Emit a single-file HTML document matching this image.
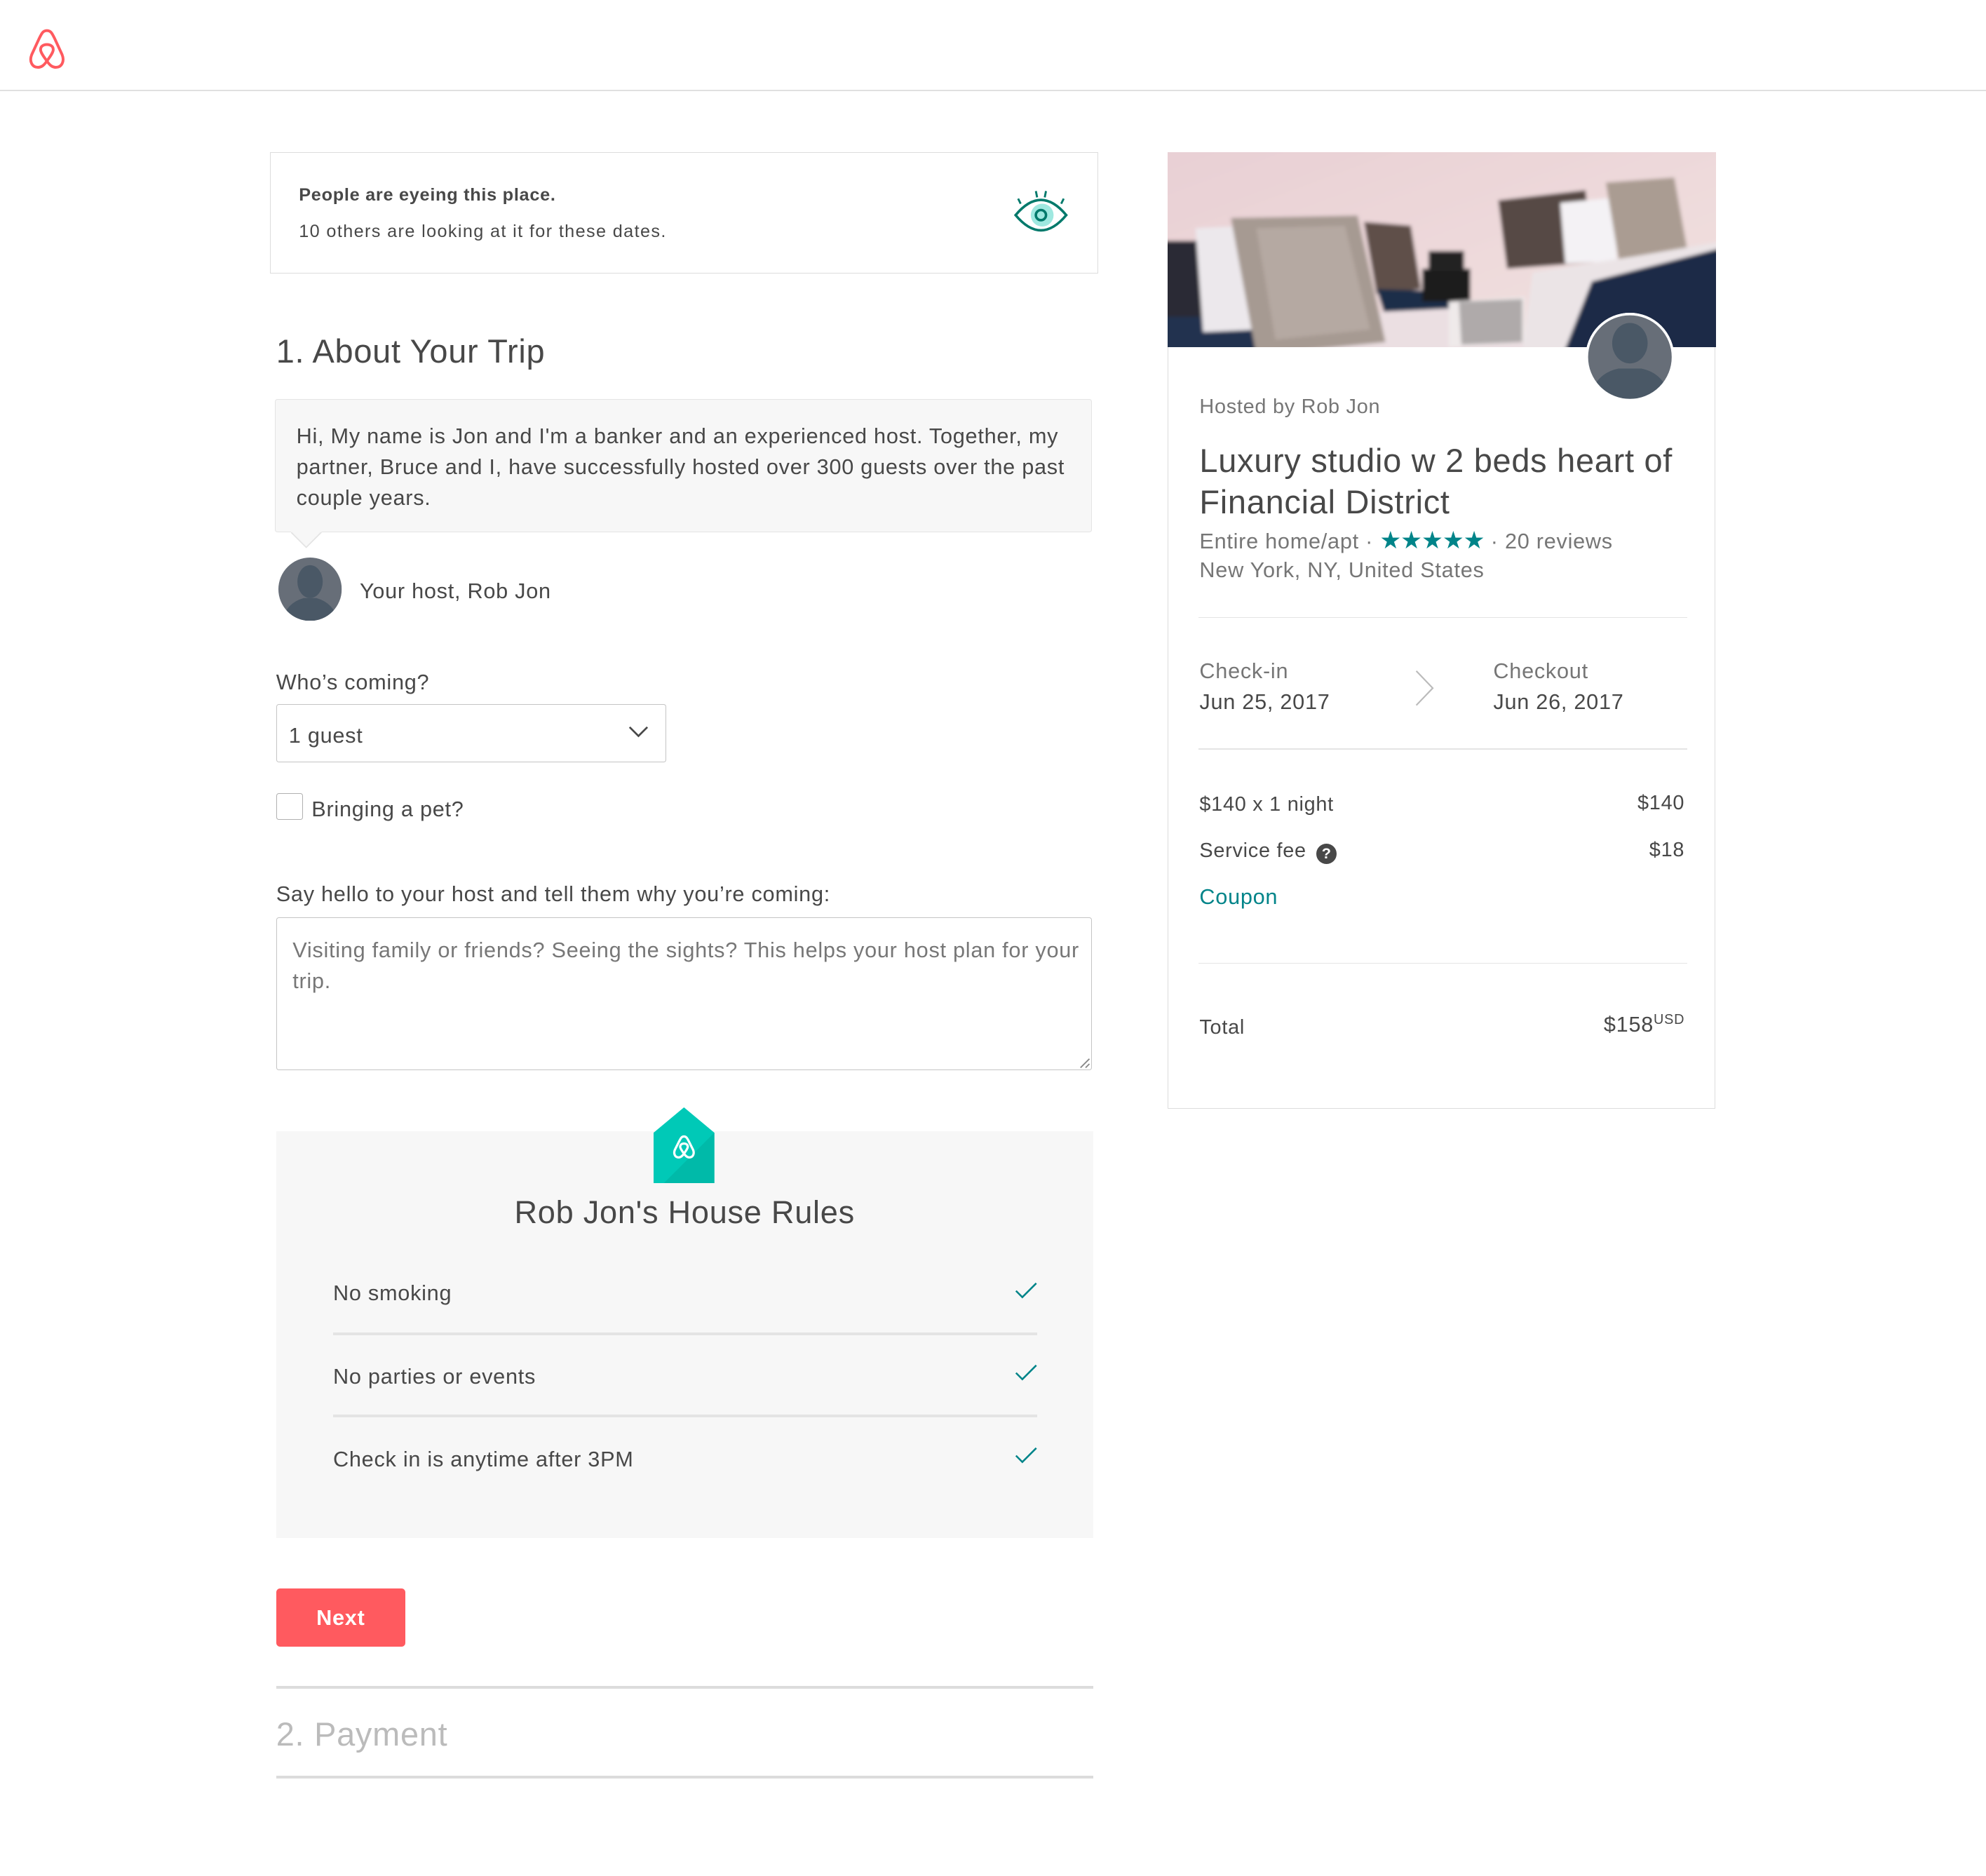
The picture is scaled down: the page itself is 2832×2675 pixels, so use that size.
<!DOCTYPE html>
<html><head><meta charset="utf-8">
<style>
html,body{margin:0;padding:0;background:#fff;}
body{width:2832px;height:2674px;overflow:hidden;}
#w{zoom:1.80612;position:relative;width:1568px;height:1481px;font-family:"Liberation Sans",sans-serif;color:#484848;letter-spacing:0.4px;}
.a{position:absolute;white-space:nowrap;}
.line{position:absolute;height:1px;background:#e4e4e4;}
</style></head><body><div id="w">
<!-- header -->
<svg class="a" style="left:21px;top:22px" width="32" height="34" viewBox="0 0 32 34"><path d="M16 2 C13 2 12 4 10 8 L4 21 C2 26 4 31 9 31 C12 31 14 29 16 26 C18 29 20 31 23 31 C28 31 30 26 28 21 L22 8 C20 4 19 2 16 2 Z M16 26 C13 22 11 19 11 17 C11 14.5 13 13 16 13 C19 13 21 14.5 21 17 C21 19 19 22 16 26 Z" fill="none" stroke="#ff5a5f" stroke-width="2.2"/></svg>
<div class="line" style="left:0;top:71px;width:1568px;background:#e0e0e0"></div>

<!-- alert -->
<div class="a" style="left:213px;top:120px;width:653px;height:95px;border:1px solid #dcdcdc;"></div>
<div class="a" style="left:236px;top:146px;font-size:14px;font-weight:bold;letter-spacing:0.4px">People are eyeing this place.</div>
<div class="a" style="left:236px;top:175px;font-size:14px;letter-spacing:0.75px">10 others are looking at it for these dates.</div>
<svg class="a" style="left:798px;top:148px" width="48" height="42" viewBox="0 0 48 42"><circle cx="25" cy="22" r="9" fill="#9fe8e0"/><path d="M4 22 Q24 -2 44 22 Q24 46 4 22 Z" fill="none" stroke="#00796b" stroke-width="2"/><circle cx="24" cy="22" r="4" fill="none" stroke="#00796b" stroke-width="2"/><path d="M20 3 l1 5 M28 3 l-1 5 M6 9 l2 4 M42 9 l-2 4" stroke="#00796b" stroke-width="1.6"/></svg>

<div class="a" style="left:218px;top:262px;font-size:26px;">1. About Your Trip</div>

<div class="a" style="left:217px;top:315px;width:644px;height:104px;background:#f7f7f7;border:1px solid #e4e4e4;border-radius:2px"></div>
<svg class="a" style="left:230px;top:419px" width="24" height="14"><path d="M0 1 L12 13 L24 1" fill="#f7f7f7" stroke="#e4e4e4"/><rect x="0" y="0" width="24" height="1" fill="#f7f7f7"/></svg>
<div class="a" style="left:234px;top:332px;width:620px;white-space:normal;font-size:17px;line-height:24.5px;">Hi, My name is Jon and I'm a banker and an experienced host. Together, my partner, Bruce and I, have successfully hosted over 300 guests over the past couple years.</div>

<svg class="a" style="left:220px;top:440px" width="50" height="50" viewBox="0 0 50 50"><defs><clipPath id="c1"><circle cx="25" cy="25" r="25"/></clipPath></defs><g clip-path="url(#c1)"><rect width="50" height="50" fill="#676e78"/><ellipse cx="25" cy="19" rx="10" ry="13" fill="#4a5866"/><path d="M3 50 Q6 36 20 32 L30 32 Q44 36 47 50 Z" fill="#4a5866"/></g></svg>
<div class="a" style="left:284px;top:457px;font-size:17px;">Your host, Rob Jon</div>

<div class="a" style="left:218px;top:529px;font-size:17px;">Who’s coming?</div>
<div class="a" style="left:218px;top:556px;width:307px;height:45px;border:1px solid #c4c4c4;border-radius:2px"></div>
<div class="a" style="left:228px;top:571px;font-size:17px;">1 guest</div>
<svg class="a" style="left:496px;top:573px" width="16" height="10"><path d="M1 1 L8 8 L15 1" fill="none" stroke="#484848" stroke-width="1.5"/></svg>

<div class="a" style="left:218px;top:626px;width:20px;height:20px;border:1px solid #b0b0b0;border-radius:2px"></div>
<div class="a" style="left:246px;top:629px;font-size:17px;">Bringing a pet?</div>

<div class="a" style="left:218px;top:696px;font-size:17px;">Say hello to your host and tell them why you’re coming:</div>
<div class="a" style="left:218px;top:724px;width:643px;height:120px;border:1px solid #c4c4c4;border-radius:2px"></div>
<div class="a" style="left:231px;top:738px;width:625px;white-space:normal;font-size:17px;line-height:24.5px;color:#777">Visiting family or friends? Seeing the sights? This helps your host plan for your trip.</div>
<svg class="a" style="left:852px;top:835px" width="9" height="9"><path d="M1 8 L8 1 M5 8 L8 5" stroke="#888" stroke-width="1"/></svg>

<!-- house rules -->
<div class="a" style="left:218px;top:893px;width:645px;height:321px;background:#f7f7f7"></div>
<svg class="a" style="left:516px;top:874px" width="48" height="60" viewBox="0 0 48 60"><path d="M24 0 L48 20 L48 60 L0 60 L0 20 Z" fill="#00c9b7"/><path d="M48 20 L48 60 L8 60 Z" fill="#00b3a3" opacity="0.7"/><path d="M24 23 C22.2 23 21.5 24.2 20.3 26.6 L16.8 33.5 C15.6 36.5 16.8 39.5 19.8 39.5 C21.6 39.5 22.8 38.3 24 36.5 C25.2 38.3 26.4 39.5 28.2 39.5 C31.2 39.5 32.4 36.5 31.2 33.5 L27.7 26.6 C26.5 24.2 25.8 23 24 23 Z M24 36.5 C22.2 34.1 21 32.3 21 31.1 C21 29.6 22.2 28.6 24 28.6 C25.8 28.6 27 29.6 27 31.1 C27 32.3 25.8 34.1 24 36.5 Z" fill="none" stroke="#fff" stroke-width="1.8"/></svg>
<div class="a" style="left:218px;top:943px;width:645px;text-align:center;font-size:25px;">Rob Jon's House Rules</div>
<div class="a" style="left:263px;top:1011px;font-size:17px;">No smoking</div>
<div class="a" style="left:263px;top:1077px;font-size:17px;">No parties or events</div>
<div class="a" style="left:263px;top:1142px;font-size:17px;">Check in is anytime after 3PM</div>
<div class="line" style="left:263px;top:1052px;width:556px;height:2px;background:#e4e4e4"></div>
<div class="line" style="left:263px;top:1117px;width:556px;height:2px;background:#e4e4e4"></div>
<svg class="a" style="left:801px;top:1012px" width="18" height="14"><path d="M1 7 L6 12 L17 1" fill="none" stroke="#008489" stroke-width="1.4"/></svg>
<svg class="a" style="left:801px;top:1077px" width="18" height="14"><path d="M1 7 L6 12 L17 1" fill="none" stroke="#008489" stroke-width="1.4"/></svg>
<svg class="a" style="left:801px;top:1142px" width="18" height="14"><path d="M1 7 L6 12 L17 1" fill="none" stroke="#008489" stroke-width="1.4"/></svg>

<div class="a" style="left:218px;top:1254px;width:102px;height:46px;background:#ff5a5f;border-radius:3px;color:#fff;font-weight:bold;font-size:17px;text-align:center;line-height:46px">Next</div>

<div class="line" style="left:218px;top:1331px;width:645px;height:2px;background:#dcdcdc"></div>
<div class="a" style="left:218px;top:1354px;font-size:26px;color:#bbb">2. Payment</div>
<div class="line" style="left:218px;top:1402px;width:645px;height:2px;background:#dcdcdc"></div>

<!-- right card -->
<div class="a" style="left:922px;top:120px;width:431px;height:754px;border:1px solid #dcdcdc"></div>
<svg class="a" style="left:922px;top:120px" width="433" height="154" viewBox="0 0 433 154" preserveAspectRatio="none">
<defs><linearGradient id="wall" x1="0" y1="0" x2="1" y2="1"><stop offset="0" stop-color="#e8cfd4"/><stop offset="1" stop-color="#f2e2e0"/></linearGradient><filter id="bl" x="-5%" y="-5%" width="110%" height="110%"><feGaussianBlur stdDeviation="1.5"/></filter><clipPath id="ic"><rect width="433" height="154"/></clipPath></defs>
<g clip-path="url(#ic)"><g filter="url(#bl)">
<rect x="-5" y="-5" width="443" height="164" fill="url(#wall)"/>
<rect x="-5" y="70" width="41" height="90" fill="#2b2b35"/>
<rect x="-5" y="130" width="75" height="30" fill="#243150"/>
<path d="M22 60 L66 58 L72 140 L28 142 Z" fill="#ece8ec"/>
<path d="M155 55 L192 58 L200 108 L165 112 Z" fill="#5e4f4a"/>
<path d="M165 108 L230 110 L232 128 L172 130 Z" fill="#1f2d48"/>
<path d="M60 160 L170 126 L232 123 L300 160 Z" fill="#ebdfe2"/>
<path d="M50 52 L150 50 L172 150 L70 160 Z" fill="#a69a92"/>
<path d="M70 60 L140 58 L160 140 L85 148 Z" fill="#c0b4ad" opacity="0.6"/>
<rect x="201" y="92" width="38" height="26" fill="#1a1a1a"/>
<rect x="206" y="78" width="28" height="16" fill="#222"/>
<path d="M222 118 L282 114 L282 150 L222 154 Z" fill="#efeaea"/>
<path d="M230 118 L280 116 L280 150 L232 152 Z" fill="#3a3434" opacity="0.35"/>
<path d="M261 38 L330 30 L336 87 L268 92 Z" fill="#564844"/>
<path d="M310 40 L352 36 L355 86 L314 88 Z" fill="#f4f2f5"/>
<path d="M346 24 L400 20 L413 92 L358 96 Z" fill="#aa9c92"/>
<path d="M280 160 L288 95 L370 82 L440 70 L440 160 Z" fill="#ebe4e6"/>
<path d="M312 160 L335 102 L440 75 L440 160 Z" fill="#1c2c47"/>
</g></g>
</svg>
<svg class="a" style="left:1252px;top:247px" width="70" height="70" viewBox="0 0 70 70"><defs><clipPath id="c2"><circle cx="35" cy="35" r="34"/></clipPath></defs><circle cx="35" cy="35" r="35" fill="#fff"/><g clip-path="url(#c2)"><rect width="70" height="70" fill="#676e78"/><ellipse cx="35" cy="24" rx="14" ry="16" fill="#4a5866"/><path d="M2 72 Q6 48 26 44 L44 44 Q64 48 68 72 Z" fill="#4a5866"/></g><circle cx="35" cy="35" r="34" fill="none" stroke="#fff" stroke-width="2"/></svg>

<div class="a" style="left:947px;top:312px;font-size:16px;color:#767676">Hosted by Rob Jon</div>
<div class="a" style="left:947px;top:347px;font-size:26px;line-height:33px;white-space:normal;width:395px">Luxury studio w 2 beds heart of Financial District</div>
<div class="a" style="left:947px;top:416px;font-size:17px;color:#767676">Entire home/apt · <span style="color:#008489;font-size:19px;letter-spacing:-0.5px">★★★★★</span> · 20 reviews</div>
<div class="a" style="left:947px;top:440px;font-size:17px;color:#767676">New York, NY, United States</div>

<div class="line" style="left:946px;top:487px;width:386px"></div>
<div class="a" style="left:947px;top:520px;font-size:17px;color:#767676">Check-in</div>
<div class="a" style="left:947px;top:544px;font-size:17px;">Jun 25, 2017</div>
<svg class="a" style="left:1116px;top:529px" width="17" height="29"><path d="M2 1 L15 14.5 L2 28" fill="none" stroke="#bbb" stroke-width="1.2"/></svg>
<div class="a" style="left:1179px;top:520px;font-size:17px;color:#767676">Checkout</div>
<div class="a" style="left:1179px;top:544px;font-size:17px;">Jun 26, 2017</div>
<div class="line" style="left:946px;top:591px;width:386px"></div>

<div class="a" style="left:947px;top:626px;font-size:16px;">$140 x 1 night</div>
<div class="a" style="right:238px;top:625px;font-size:16px;">$140</div>
<div class="a" style="left:947px;top:663px;font-size:16px;">Service fee <span style="display:inline-block;width:16px;height:16px;border-radius:50%;background:#484848;color:#fff;font-size:12px;font-weight:bold;text-align:center;line-height:16px;vertical-align:-1px;margin-left:3px;letter-spacing:0">?</span></div>
<div class="a" style="right:238px;top:662px;font-size:16px;">$18</div>
<div class="a" style="left:947px;top:698px;font-size:17px;color:#008489">Coupon</div>
<div class="line" style="left:946px;top:760px;width:386px"></div>
<div class="a" style="left:947px;top:802px;font-size:16px;">Total</div>
<div class="a" style="right:238px;top:799px;font-size:17px;">$158<sup style="font-size:11px;vertical-align:6px">USD</sup></div>
</div></body></html>
